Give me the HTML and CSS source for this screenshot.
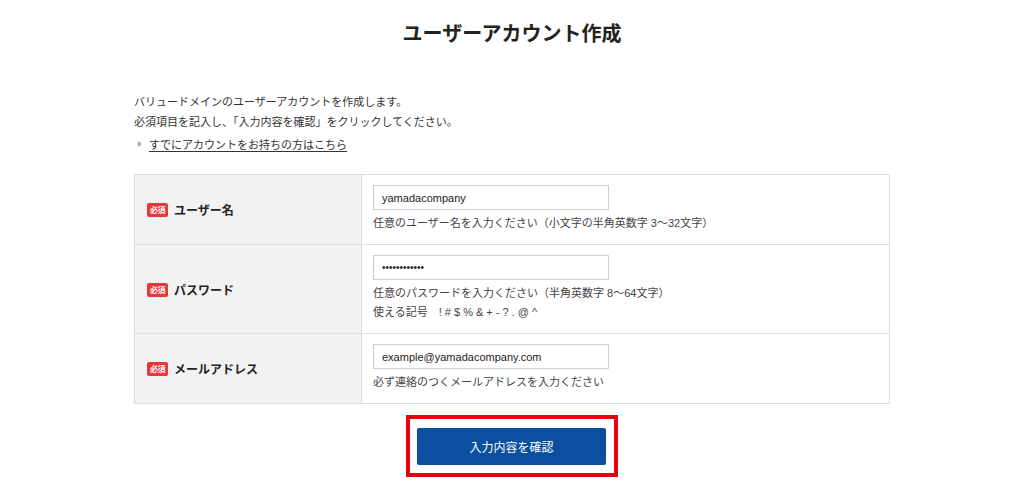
FILE: index.html
```html
<!DOCTYPE html>
<html lang="ja">
<head>
<meta charset="utf-8">
<title>ユーザーアカウント作成</title>
<link rel="stylesheet" href="styles.css">
</head>
<body>
<div class="page">
  <h1 class="title">ユーザーアカウント作成</h1>
  <div class="intro">
    <p>バリュードメインのユーザーアカウントを作成します。<br>必須項目を記入し、「入力内容を確認」をクリックしてください。</p>
    <p class="login"><span class="arrow"></span><a href="#">すでにアカウントをお持ちの方はこちら</a></p>
  </div>
  <table class="form">
    <tr>
      <th><span class="req">必須</span>ユーザー名</th>
      <td>
        <input class="field" type="text" value="yamadacompany">
        <p class="help">任意のユーザー名を入力ください（小文字の半角英数字 3〜32文字）</p>
      </td>
    </tr>
    <tr>
      <th><span class="req">必須</span>パスワード</th>
      <td>
        <input class="field pw" type="password" value="abcdefghijkl">
        <p class="help">任意のパスワードを入力ください（半角英数字 8〜64文字）<br>使える記号　! # $ % &amp; + - ? . @ ^</p>
      </td>
    </tr>
    <tr>
      <th><span class="req">必須</span>メールアドレス</th>
      <td>
        <input class="field" type="text" value="example@yamadacompany.com">
        <p class="help">必ず連絡のつくメールアドレスを入力ください</p>
      </td>
    </tr>
  </table>
  <div class="actions">
    <div class="frame">
      <button class="submit" type="button">入力内容を確認</button>
    </div>
  </div>
</div>
</body>
</html>
```

FILE: styles.css
```css
html, body {
  margin: 0;
  padding: 0;
  background: #fff;
}
body {
  font-family: "Liberation Sans", "Noto Sans CJK JP", sans-serif;
  color: #333;
  font-size: 11px;
}
.page {
  width: 756px;
  margin: 0 auto;
}
.title {
  margin: 0;
  padding-top: 21px;
  font-size: 20px;
  line-height: 24px;
  font-weight: 700;
  text-align: center;
  color: #222;
  font-family: "Noto Sans CJK JP", sans-serif;
}
.intro {
  margin-top: 46px;
}
.intro p {
  margin: 0;
  line-height: 20px;
  font-family: "Noto Sans CJK JP", sans-serif;
}
.intro .login {
  margin-top: 3px;
  display: flex;
  align-items: center;
}
.arrow {
  width: 0;
  height: 0;
  border-left: 4px solid #aaa;
  border-top: 3px solid transparent;
  border-bottom: 3px solid transparent;
  margin: 0 7px 0 4px;
}
.login a {
  color: #333;
  text-decoration: underline;
  text-underline-offset: 2px;
}
.form {
  margin-top: 20px;
  width: 756px;
  border-collapse: collapse;
}
.form th, .form td {
  border: 1px solid #ddd;
  vertical-align: middle;
}
.form th {
  width: 202px;
  background: #f2f2f2;
  text-align: left;
  padding: 0 12px;
  font-size: 12px;
  font-weight: 700;
  color: #222;
  font-family: "Noto Sans CJK JP", sans-serif;
}
.req {
  display: inline-block;
  width: 21px;
  height: 14px;
  line-height: 14px;
  margin-right: 6px;
  background: #e8363a;
  color: #fff;
  border-radius: 2px;
  font-size: 8px;
  text-align: center;
  vertical-align: 2px;
  letter-spacing: -0.5px;
}
.form td {
  padding: 10px 11px 11px;
}
.field {
  display: block;
  box-sizing: border-box;
  width: 236px;
  height: 25px;
  margin: 0 0 4px;
  padding: 0 8px;
  border: 1px solid #cfcfcf;
  border-radius: 0;
  font-family: "Liberation Sans", sans-serif;
  font-size: 11px;
  color: #222;
  background: #fff;
}
.field.pw {
  font-size: 10px;
}
.help {
  margin: 0;
  line-height: 19px;
  color: #444;
}
.actions {
  display: flex;
  justify-content: center;
  margin-top: 11px;
}
.frame {
  border: 4px solid #e8000e;
  padding: 9px 8px 8px 7px;
}
.submit {
  display: block;
  width: 189px;
  height: 37px;
  border: 0;
  border-radius: 2px;
  background: #0a4fa0;
  color: #fff;
  font-size: 12px;
  font-family: "Noto Sans CJK JP", sans-serif;
}
```
